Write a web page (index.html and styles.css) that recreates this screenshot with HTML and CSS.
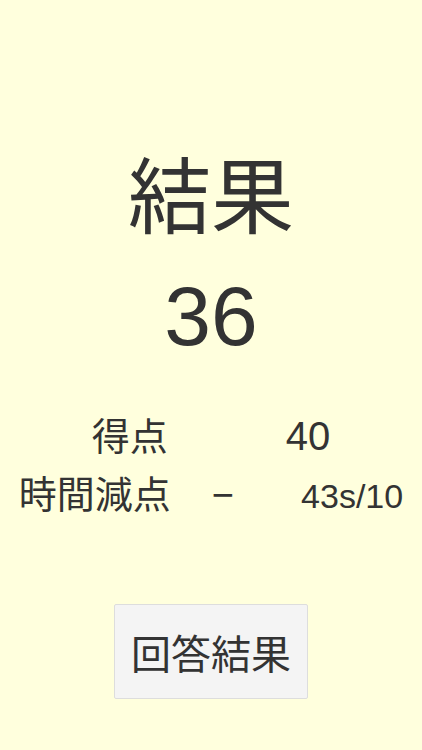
FILE: index.html
```html
<!DOCTYPE html>
<html lang="ja">
<head>
    <meta charset="UTF-8">
    <meta name="viewport" content="width=device-width, initial-scale=1.0">
    <title>結果</title>
    <link rel="stylesheet" href="styles.css">
</head>
<body>
    <div class="result">
        <h1 class="title">結果</h1>
        <div class="score">36</div>

        <div class="detail">
            <div class="row">
                <span class="label">得点</span>
                <span class="value value-point">40</span>
            </div>
            <div class="row">
                <span class="label">時間減点</span>
                <span class="minus">−</span>
                <span class="value value-time">43s/10</span>
            </div>
        </div>

        <button class="answer-button">回答結果</button>
    </div>
</body>
</html>
```

FILE: styles.css
```css
body {
    margin: 0;
    background-color: #ffffdd;
    color: #333;
    font-family: 'Liberation Sans', 'Noto Sans CJK JP', sans-serif;
}

.result {
    display: flex;
    flex-direction: column;
    align-items: center;
    padding-top: 141px;
}

.title {
    margin: 0;
    font-family: 'Noto Sans CJK JP', sans-serif;
    font-size: 83px;
    font-weight: normal;
    line-height: 100px;
}

.score {
    margin-top: 25px;
    font-size: 84px;
    line-height: 100px;
}

.detail {
    margin-top: 38px;
    display: flex;
    flex-direction: column;
    align-items: center;
}

.row {
    display: flex;
    align-items: baseline;
    font-size: 38px;
    line-height: 60px;
}

.row + .row {
    margin-top: -4px;
}

.label {
    font-family: 'Noto Sans CJK JP', sans-serif;
}

.value-point {
    margin-left: 118px;
    font-size: 40px;
}

.minus {
    margin-left: 41px;
}

.value-time {
    margin-left: 67px;
    font-size: 34px;
}

.answer-button {
    margin-top: 78px;
    width: 194px;
    height: 95px;
    padding: 0;
    background-color: #f4f4f4;
    border: 1px solid #ddd;
    border-radius: 2px;
    color: #333;
    font-family: 'Noto Sans CJK JP', sans-serif;
    font-size: 40px;
}
```
